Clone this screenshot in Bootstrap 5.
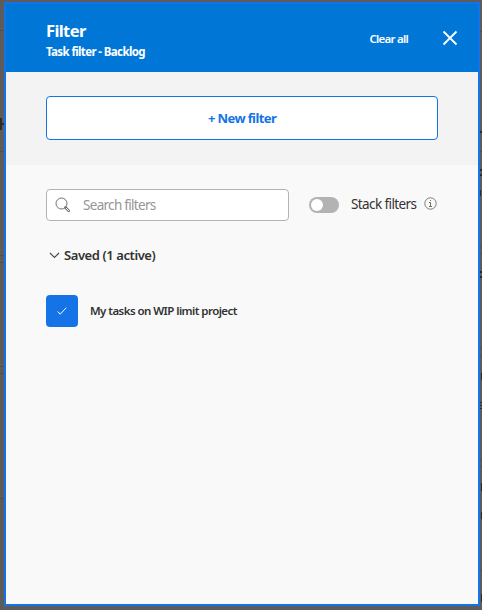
<!DOCTYPE html>
<html lang="en">
<head>
<meta charset="utf-8">
<title>Filter</title>
<meta name="viewport" content="width=device-width, initial-scale=1">
<link href="https://cdn.jsdelivr.net/npm/bootstrap@5.3.0/dist/css/bootstrap.min.css" rel="stylesheet">
<style>
body{width:482px;height:610px;background:#5d5c5a;font-family:"Noto Sans","Open Sans",sans-serif;color:#323232}
.backdrop{inset:0;z-index:0}
.filter-panel{z-index:1;margin:2px 2px 4px 4px;width:476px;height:604px;border:2px solid #1473e6;background:#f9f9f9}
.panel-head{height:68px;background:#0077d7;padding:0 20px 0 40px}
.panel-title{font-size:16.5px;line-height:22px;font-weight:700;letter-spacing:-.6px;margin-top:4px}
.panel-sub{font-size:11.5px;line-height:16px;font-weight:700;letter-spacing:-.62px;margin-top:2px}
.clear-btn{font-size:11.5px;line-height:16px;font-weight:600;letter-spacing:-.75px;margin:2px 34px 0 0}
.new-zone{height:93px;background:#f3f3f3;padding:24px 40px 25px}
.new-btn{--bs-btn-border-radius:4px;height:44px;font-size:13px;font-weight:700;letter-spacing:-.6px;color:#1473e6;background:#fff;border-color:#1473e6}
.new-btn span{display:block;padding-top:2px}
.panel-body{padding:24px 40px 0}
.search-box{width:243px;height:32px;border:1px solid #b3b3b3;border-radius:4px;background:#fff;padding-left:9px}
.search-box svg{margin-left:-1px}
.search-box input{font-size:13.5px;letter-spacing:-.7px;padding:0 0 0 12px;height:28px;line-height:28px}
.search-box input::placeholder{color:#959595;opacity:1}
.toggle{width:30px;height:16px;border-radius:8px;background:#b3b3b3;padding:2px;margin-left:20px}
.toggle i{width:12px;height:12px;border-radius:50%;background:#fff}
.stack-label{font-size:13.5px;line-height:20px;letter-spacing:-.6px;margin:-2px 0 0 12px;width:66px}
.info-icon{margin:-4px 0 0 7px}
.saved-head{height:20px;margin-top:24px;padding-left:3px;font-size:13px;font-weight:600;letter-spacing:-.42px}
.saved-head span{padding-top:1px}
.saved-item{margin-top:30px;height:32px;font-size:11.5px;font-weight:600;letter-spacing:-.56px}
.check-btn{width:32px;height:32px;border-radius:4px;background:#1473e6;margin-right:12px}
</style>
<script src="https://cdn.jsdelivr.net/npm/bootstrap@5.3.0/dist/js/bootstrap.bundle.min.js"></script>
</head>
<body class="overflow-hidden position-relative">
<svg class="backdrop position-absolute" width="482" height="610" aria-hidden="true">
  <g stroke="#51504f"><path d="M0 30.500h4M0 151.500h4M0 255.500h4M0 262.500h4M0 366.500h4M0 373.500h4M0 498.500h4M480 31.500h2M480 151.500h2M480 246.500h2M480 253.500h2M480 348.500h2M480 355.500h2M480 459.500h2M480 466.500h2M480 570.500h2"/></g>
  <path d="M0 118h2v12H0zM2 123h2v2H2z" fill="#2b2b2b"/>
  <path d="M480 131h2v2h-2zM480 169h2v2h-2zM480 174h2v2h-2zM480 190h1v6h-1zM480 271h2v2h-2zM480 276h2v2h-2zM481 373h1v7h-1zM480 402h2v1h-2zM480 405h2v1h-2zM480 408h2v1h-2zM481 483h1v8h-1zM481 512h1v7h-1zM481 594h1v8h-1z" fill="#2b2b2b"/>
</svg>
<main class="filter-panel position-relative">
  <header class="panel-head d-flex align-items-center text-white">
    <div class="flex-grow-1">
      <h1 class="panel-title mb-0">Filter</h1>
      <p class="panel-sub mb-0">Task filter - Backlog</p>
    </div>
    <button class="clear-btn btn border-0 p-0 text-white">Clear all</button>
    <button class="btn border-0 p-0 d-flex text-white" aria-label="Close"><svg width="16" height="16" fill="none" stroke="currentColor" stroke-width="1.800"><path d="M1.500 1.500l13 13M14.500 1.500l-13 13"/></svg></button>
  </header>
  <section class="new-zone"><button class="new-btn btn w-100 p-0"><span>+ New filter</span></button></section>
  <section class="panel-body">
    <div class="d-flex align-items-center">
      <label class="search-box d-flex align-items-center">
        <svg class="flex-shrink-0" width="16" height="16" fill="none" stroke="#6e6e6e"><circle cx="6.500" cy="6.500" r="5.500"/><path d="M10.500 10.500l3.300 3.300" stroke-width="2.600" stroke-linecap="round"/><path d="M11.200 11.200l2.600 2.600" stroke="#fff" stroke-linecap="round"/></svg>
        <input class="form-control border-0 bg-transparent shadow-none" placeholder="Search filters" aria-label="Search filters">
      </label>
      <span class="toggle d-flex flex-shrink-0" role="switch" aria-checked="false"><i></i></span>
      <span class="stack-label text-nowrap flex-shrink-0">Stack filters</span>
      <svg class="info-icon flex-shrink-0" width="13" height="13" fill="none" stroke="#6e6e6e"><circle cx="6.500" cy="6.500" r="5.700" stroke-width=".9"/><path d="M5 5.500h1.500v4M5 9.500h3M6 3.500h1"/></svg>
    </div>
    <div class="saved-head d-flex align-items-center">
      <svg class="me-1" width="11" height="8" fill="none" stroke="#4b4b4b" stroke-width="1.200"><path d="M1 2l4.500 4.500L10 2"/></svg>
      <span class="text-nowrap">Saved (1 active)</span>
    </div>
    <div class="saved-item d-flex align-items-center">
      <span class="check-btn d-flex align-items-center justify-content-center"><svg width="10" height="8" fill="none" stroke="#fff"><path d="M.7 4.500l2.500 2.700L9.300.7"/></svg></span>
      <span class="text-nowrap">My tasks on WIP limit project</span>
    </div>
  </section>
</main>
</body>
</html>
